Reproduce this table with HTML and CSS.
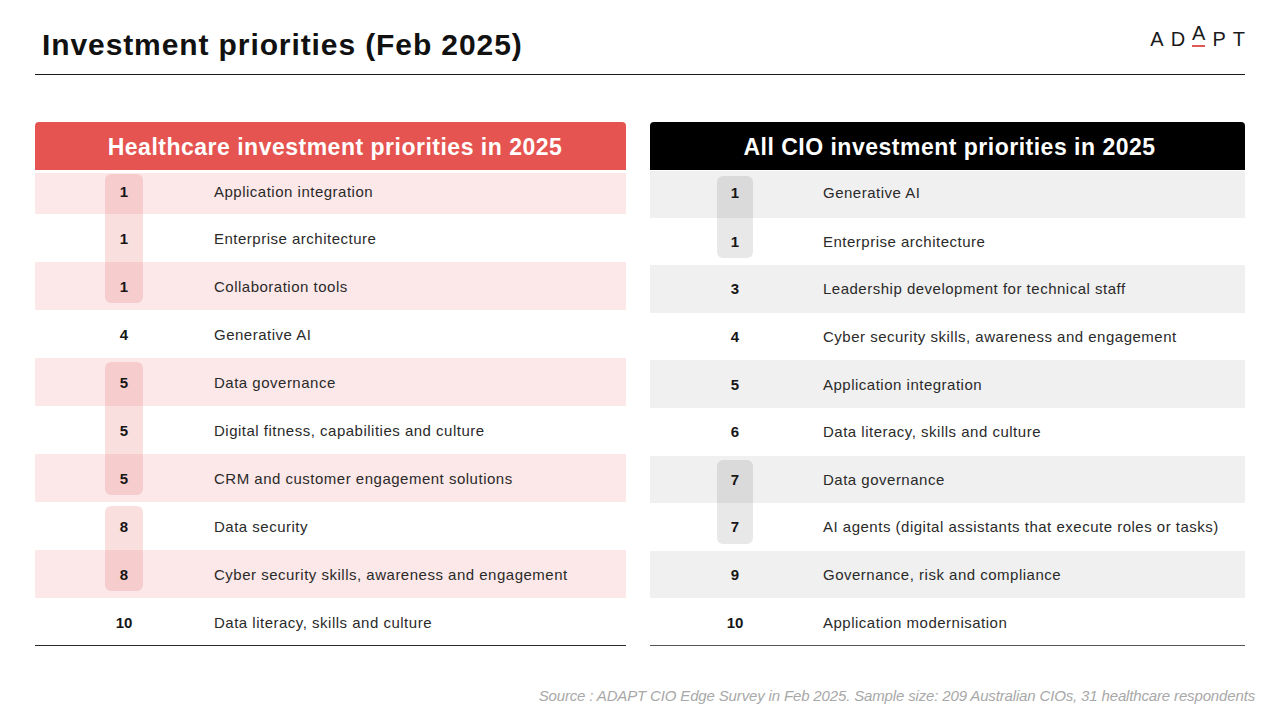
FILE: index.html
```html
<!DOCTYPE html>
<html lang="en">
<head>
<meta charset="utf-8">
<title>Investment priorities (Feb 2025)</title>
<link rel="stylesheet" href="styles.css">
</head>
<body>
<div class="page">
  <header class="top">
    <h1 class="title">Investment priorities (Feb 2025)</h1>
    <div class="logo"><span>A</span><span>D</span><span class="logo-a">A</span><span>P</span><span>T</span></div>
  </header>

  <main class="tables">
    <section class="panel panel-health">
      <div class="panel-head">Healthcare investment priorities in 2025</div>
      <div class="panel-body">
        <div class="row shade"><div class="rank pill first">1</div><div class="label">Application integration</div></div>
        <div class="row"><div class="rank pill">1</div><div class="label">Enterprise architecture</div></div>
        <div class="row shade"><div class="rank pill last">1</div><div class="label">Collaboration tools</div></div>
        <div class="row"><div class="rank">4</div><div class="label">Generative AI</div></div>
        <div class="row shade"><div class="rank pill first">5</div><div class="label">Data governance</div></div>
        <div class="row"><div class="rank pill">5</div><div class="label">Digital fitness, capabilities and culture</div></div>
        <div class="row shade"><div class="rank pill last">5</div><div class="label">CRM and customer engagement solutions</div></div>
        <div class="row"><div class="rank pill first">8</div><div class="label">Data security</div></div>
        <div class="row shade"><div class="rank pill last">8</div><div class="label">Cyber security skills, awareness and engagement</div></div>
        <div class="row"><div class="rank">10</div><div class="label">Data literacy, skills and culture</div></div>
      </div>
    </section>

    <section class="panel panel-all">
      <div class="panel-head">All CIO investment priorities in 2025</div>
      <div class="panel-body">
        <div class="row shade"><div class="rank pill first">1</div><div class="label">Generative AI</div></div>
        <div class="row"><div class="rank pill last">1</div><div class="label">Enterprise architecture</div></div>
        <div class="row shade"><div class="rank">3</div><div class="label">Leadership development for technical staff</div></div>
        <div class="row"><div class="rank">4</div><div class="label">Cyber security skills, awareness and engagement</div></div>
        <div class="row shade"><div class="rank">5</div><div class="label">Application integration</div></div>
        <div class="row"><div class="rank">6</div><div class="label">Data literacy, skills and culture</div></div>
        <div class="row shade"><div class="rank pill first">7</div><div class="label">Data governance</div></div>
        <div class="row"><div class="rank pill last">7</div><div class="label">AI agents (digital assistants that execute roles or tasks)</div></div>
        <div class="row shade"><div class="rank">9</div><div class="label">Governance, risk and compliance</div></div>
        <div class="row"><div class="rank">10</div><div class="label">Application modernisation</div></div>
      </div>
    </section>
  </main>

  <footer class="source">Source : ADAPT CIO Edge Survey in Feb 2025. Sample size: 209 Australian CIOs, 31 healthcare respondents</footer>
</div>
</body>
</html>
```

FILE: styles.css
```css
* { box-sizing: border-box; margin: 0; padding: 0; }

html, body {
  background: #ffffff;
}

body {
  font-family: "Liberation Sans", Arial, sans-serif;
  color: #222222;
}

.page {
  width: 1280px;
  height: 720px;
  padding: 0 35px;
  display: flex;
  flex-direction: column;
}

/* ---------- top bar ---------- */
.top {
  height: 75px;
  display: flex;
  justify-content: space-between;
  align-items: flex-end;
  border-bottom: 1px solid #1a1a1a;
  padding: 0 0 14px 7px;
}

.title {
  font-size: 30px;
  font-weight: 700;
  color: #111111;
  line-height: 1;
  letter-spacing: 0.9px;
}

.logo {
  font-family: "Liberation Sans", Arial, sans-serif;
  font-size: 20px;
  font-weight: 400;
  color: #1a1a1a;
  letter-spacing: 7px;
  line-height: 1;
  margin-right: -7px;
  padding-bottom: 11px;
}

.logo-a {
  display: inline-block;
  vertical-align: 6px;
  padding-bottom: 2px;
  border-bottom: 2px solid #dd5a55;
  letter-spacing: 0;
  margin-right: 7px;
}

/* ---------- tables ---------- */
.tables {
  display: flex;
  gap: 24px;
  margin-top: 47px;
}

.panel {
  display: flex;
  flex-direction: column;
}

.panel-health { width: 591px; }
.panel-all { width: 595px; }

.panel-head {
  height: 48px;
  padding-top: 2px;
  border-radius: 4px 4px 0 0;
  color: #ffffff;
  font-weight: 700;
  font-size: 23px;
  display: flex;
  align-items: center;
  justify-content: center;
  letter-spacing: 0.5px;
}

.panel-health .panel-head { background: #e55450; padding-left: 9px; }
.panel-all .panel-head { background: #000000; padding-left: 4px; }

.panel-body {
  height: 476px;
  display: flex;
  flex-direction: column;
  border-bottom: 1px solid #2a2a2a;
}

.panel-all .panel-body { border-bottom-color: #555555; }

.row {
  display: flex;
  align-items: stretch;
}

.panel-health .row { flex: 0 0 48px; }
.panel-health .row:first-child {
  flex: 0 0 44px;
  border-top: 3px solid #ffffff;
  padding-bottom: 4px;
}

.panel-all .row { flex: 0 0 47.6px; }
.panel-all .row:first-child {
  border-top: 1px solid #ffffff;
  padding-bottom: 3px;
}

.panel-health .row.shade { background: #fce8e8; }
.panel-all .row.shade { background: #f0f0f0; }

.rank {
  position: relative;
  width: 38px;
  display: flex;
  align-items: center;
  justify-content: center;
  font-weight: 700;
  font-size: 15px;
  color: #161616;
}

.panel-health .rank { margin-left: 70px; }
.panel-all .rank { margin-left: 67px; width: 36px; }

.label {
  display: flex;
  align-items: center;
  font-size: 15px;
  color: #2a2a2a;
  letter-spacing: 0.5px;
}

.panel-health .label { margin-left: 71px; }
.panel-all .label { margin-left: 70px; }

/* pill segments drawn behind the rank number */
.pill { isolation: isolate; }
.pill::before {
  content: "";
  position: absolute;
  left: 0;
  right: 0;
  top: 0;
  bottom: 0;
  z-index: -1;
}

.panel-health .pill::before { background: rgba(230, 80, 80, 0.18); }
.panel-all .pill::before { background: rgba(0, 0, 0, 0.09); }

.pill.first::before {
  top: 4px;
  border-top-left-radius: 6px;
  border-top-right-radius: 6px;
}
.pill.last::before {
  bottom: 7px;
  border-bottom-left-radius: 6px;
  border-bottom-right-radius: 6px;
}
.panel-health .row:first-child .pill.first::before { top: 1px; }
.panel-health .row:first-child .pill::before { bottom: -4px; }
.panel-all .row:first-child .pill.first::before { top: 5px; }
.panel-all .row:first-child .pill::before { bottom: -3px; }

/* ---------- footer ---------- */
.source {
  margin-top: 41px;
  margin-right: -10px;
  text-align: right;
  font-style: italic;
  font-size: 15px;
  color: #a8a8a8;
  letter-spacing: -0.15px;
}
```
